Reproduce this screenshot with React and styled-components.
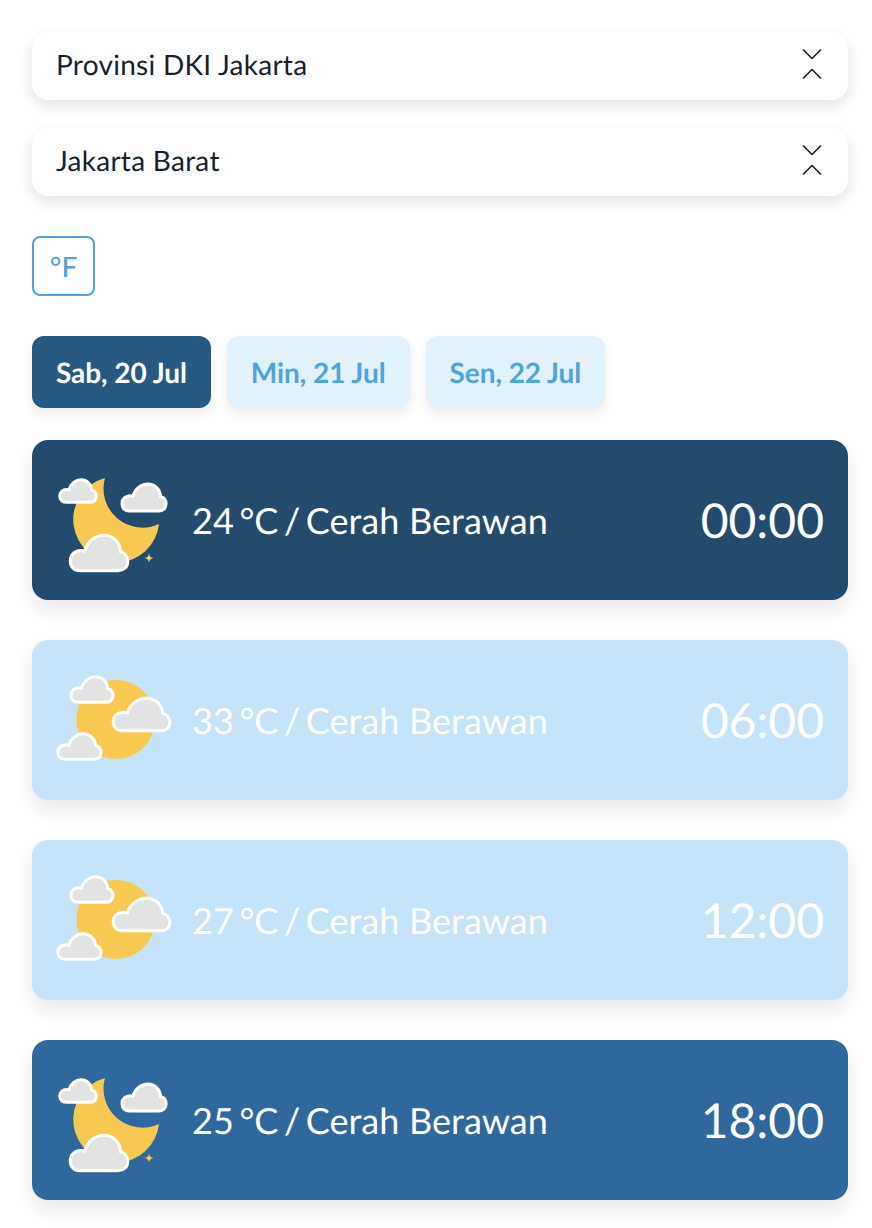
import React from "react";
import styled, { createGlobalStyle } from "styled-components";

const Global = createGlobalStyle`
  html, body { margin: 0; padding: 0; background: #fff; }
  body {
    font-family: Lato, "Open Sans", sans-serif;
    text-rendering: geometricPrecision;
    -webkit-font-smoothing: antialiased;
  }
`;

const Page = styled.div`
  box-sizing: border-box;
  width: 872px;
  height: 1228px;
  overflow: hidden;
  padding: 32px 24px 0 32px;
  display: flex;
  flex-direction: column;
`;

const SelectStack = styled.div`
  display: flex;
  flex-direction: column;
  gap: 28px;
`;

const SelectBox = styled.div`
  height: 68px;
  box-sizing: border-box;
  padding: 0 26px 4px 24px;
  display: flex;
  align-items: center;
  justify-content: space-between;
  background: #fff;
  border-radius: 16px;
  box-shadow: 0 6px 14px rgba(0, 0, 0, 0.11);
  color: #1a1f2e;
  font-size: 28px;
  letter-spacing: 0.27px;
`;

const UnitButton = styled.div`
  box-sizing: border-box;
  width: 63px;
  height: 60px;
  margin-top: 40px;
  display: flex;
  align-items: center;
  justify-content: center;
  border: 2px solid #4fa3de;
  border-radius: 8px;
  color: #4fa3de;
  font-size: 28px;
  font-weight: 500;
`;

const Tabs = styled.div`
  display: flex;
  gap: 16px;
  margin-top: 40px;
`;

const Tab = styled.div`
  box-sizing: border-box;
  height: 72px;
  padding: 0 24px;
  display: flex;
  align-items: center;
  border-radius: 12px;
  font-size: 28px;
  font-weight: 700;
  letter-spacing: -0.06px;
  background: ${(p) => (p.$active ? "#265a82" : "#e1f1fe")};
  color: ${(p) => (p.$active ? "#fff" : "#4fa3de")};
  box-shadow: 0 6px 12px rgba(0, 0, 0, 0.08);
`;

const Cards = styled.div`
  display: flex;
  flex-direction: column;
  gap: 40px;
  margin-top: 32px;
`;

const Card = styled.div`
  box-sizing: border-box;
  height: 160px;
  padding: 0 24px;
  display: flex;
  align-items: center;
  border-radius: 16px;
  color: #fff;
  background: ${(p) => p.$bg};
  box-shadow: 0 10px 20px rgba(0, 0, 0, 0.09);
`;

const IconSvg = styled.svg`
  width: 112px;
  height: 112px;
  flex: none;
  overflow: visible;
`;

const Summary = styled.div`
  margin-left: 24px;
  flex: 1;
  font-size: 36px;
`;

const Temperature = styled.span`
  word-spacing: -3.6px;
`;

const Condition = styled.span`
  word-spacing: 0.5px;
`;

const Time = styled.div`
  font-size: 48px;
`;

const CLOUD =
  "M18 60C8 60 2 53 2 44C2 34 10 27 20 27C22 27 24 27 26 28C31 12 44 2 58 2C74 2 85 14 86 29C94 31 98 38 98 45C98 54 91 60 82 60Z";

function Cloud({ x, y, w, h }) {
  return (
    <g transform={`translate(${x} ${y}) scale(${w / 100} ${h / 62})`}>
      <path d={CLOUD} fill="#e3e3e3" stroke="#fff" strokeWidth="3" vectorEffect="non-scaling-stroke" />
    </g>
  );
}

function MoonIcon() {
  return (
    <IconSvg viewBox="0 0 112 112">
      <path d="M49 14A43 43 0 1 0 103 60A39 39 0 0 1 49 14Z" fill="#f7c951" />
      <path d="M93 89.5Q93.5 93.5 97.5 94Q93.5 94.5 93 98.5Q92.5 94.5 88.5 94Q92.5 93.5 93 89.5Z" fill="#f7c951" />
      <Cloud x={3} y={15} w={38} h={24} />
      <Cloud x={65} y={19} w={46} h={29} />
      <Cloud x={13} y={70} w={60} h={38} />
    </IconSvg>
  );
}

function SunIcon() {
  return (
    <IconSvg viewBox="0 0 112 112">
      <circle cx="60" cy="55.5" r="39.5" fill="#f7c951" />
      <Cloud x={14} y={12} w={44} h={27} />
      <Cloud x={56} y={33} w={59} h={35} />
      <Cloud x={1} y={69} w={45} h={27} />
    </IconSvg>
  );
}

function Chevrons() {
  return (
    <svg width="20" height="32" viewBox="0 0 20 32" fill="none" stroke="#14171f" strokeWidth="1.5">
      <path d="M1 1.5L10 10.5L19 1.5" />
      <path d="M1 30.5L10 21.5L19 30.5" />
    </svg>
  );
}

const rows = [
  { bg: "#234b6e", Icon: MoonIcon, temp: "24 °C / ", time: "00:00" },
  { bg: "#c5e4f9", Icon: SunIcon, temp: "33 °C / ", time: "06:00" },
  { bg: "#c5e4f9", Icon: SunIcon, temp: "27 °C / ", time: "12:00" },
  { bg: "#2e689d", Icon: MoonIcon, temp: "25 °C / ", time: "18:00" },
];

export default function App() {
  return (
    <Page>
      <Global />
      <SelectStack>
        <SelectBox>
          Provinsi DKI Jakarta
          <Chevrons />
        </SelectBox>
        <SelectBox>
          Jakarta Barat
          <Chevrons />
        </SelectBox>
      </SelectStack>
      <UnitButton>°F</UnitButton>
      <Tabs>
        <Tab $active>Sab, 20 Jul</Tab>
        <Tab>Min, 21 Jul</Tab>
        <Tab>Sen, 22 Jul</Tab>
      </Tabs>
      <Cards>
        {rows.map(({ bg, Icon, temp, time }) => (
          <Card key={time} $bg={bg}>
            <Icon />
            <Summary>
              <Temperature>{temp}</Temperature>
              <Condition>Cerah Berawan</Condition>
            </Summary>
            <Time>{time}</Time>
          </Card>
        ))}
      </Cards>
    </Page>
  );
}
